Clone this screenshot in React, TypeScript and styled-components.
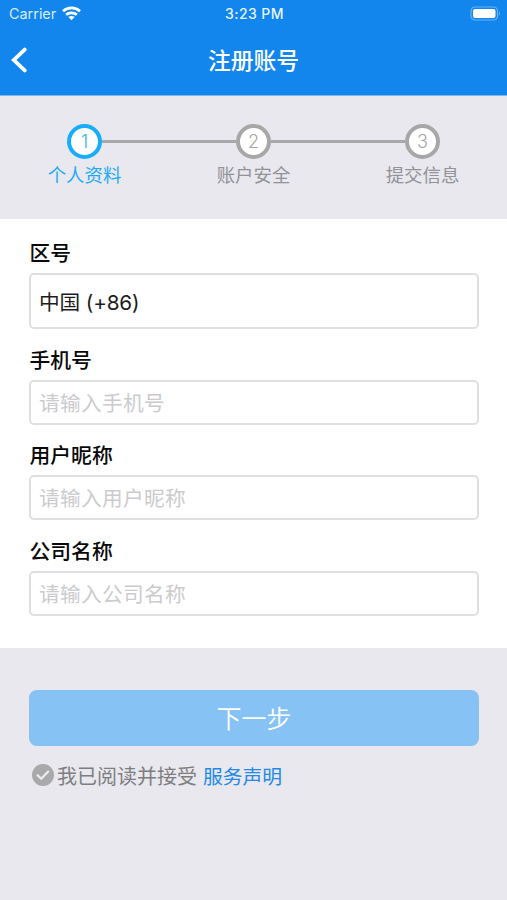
import React from "react";
import styled, { createGlobalStyle } from "styled-components";

const GlobalStyle = createGlobalStyle`
  *, *::before, *::after { box-sizing: border-box; }
  body {
    margin: 0;
    background: #e8e8ee;
    font-family: Inter, "Noto Sans CJK SC", sans-serif;
  }
`;

const Screen = styled.main`
  width: 100%;
  min-height: 900px;
  background: #e8e8ee;
`;

const Header = styled.header`
  height: 96px;
  background: #1286ed;
  border-bottom: 1px solid #7bb8f0;
  color: #fff;
`;

const StatusBar = styled.div`
  display: grid;
  grid-template-columns: 1fr auto 1fr;
  align-items: center;
  height: 27px;
  padding: 0 6px 0 9px;
`;

const Carrier = styled.div`
  display: flex;
  align-items: center;
  gap: 6px;
  font-size: 14.4px;
  line-height: 20px;
  color: #d9ecfd;
`;

const Clock = styled.div`
  margin-right: 1px;
  font-size: 14px;
  font-weight: 500;
  line-height: 20px;
  letter-spacing: 0.45px;
  color: #e9f5ff;
`;

const BatterySlot = styled.div`
  display: flex;
  justify-content: flex-end;
`;

const NavBar = styled.nav`
  display: grid;
  grid-template-columns: 60px 1fr 60px;
  align-items: center;
  height: 66px;
`;

const BackButton = styled.button`
  display: flex;
  height: 44px;
  padding: 0 0 0 9px;
  align-items: center;
  border: 0;
  background: none;
  color: #fff;
`;

const Title = styled.h1`
  margin: 0;
  padding-top: 2px;
  text-align: center;
  font-size: 22.8px;
  line-height: 32px;
  font-weight: 500;
`;

const Steps = styled.ol`
  display: grid;
  grid-template-columns: repeat(3, 169px);
  height: 123px;
  margin: 0;
  padding: 28px 0 0;
  list-style: none;
`;

const Step = styled.li<{ $active?: boolean }>`
  display: flex;
  flex-direction: column;
  align-items: center;
  color: ${(p) => (p.$active ? "#1daaf6" : "#929297")};
`;

const Track = styled.div`
  display: flex;
  align-items: center;
  width: 100%;
`;

const Line = styled.span<{ $hidden?: boolean }>`
  flex: 1;
  height: 3px;
  background: ${(p) => (p.$hidden ? "transparent" : "#a8a8aa")};
`;

const Circle = styled.span<{ $active?: boolean }>`
  display: flex;
  align-items: center;
  justify-content: center;
  width: 35px;
  height: 35px;
  border: 4px solid ${(p) => (p.$active ? "#18adfb" : "#a7a7a8")};
  border-radius: 50%;
  background: #fff;
  color: ${(p) => (p.$active ? "#2db4f7" : "#a4a4a7")};
  font-size: 18px;
  font-weight: 350;
  line-height: 27px;
`;

const StepLabel = styled.span`
  margin-top: 2px;
  font-size: 18.4px;
  line-height: 28px;
`;

const Form = styled.section`
  display: flex;
  flex-direction: column;
  height: 429px;
  padding: 17px 28px 0 29px;
  background: #fff;
`;

const Field = styled.label`
  display: block;
  margin-bottom: 13.3px;
`;

const FieldLabel = styled.span`
  display: block;
  height: 37.3px;
  padding-left: 0.5px;
  font-size: 20.8px;
  line-height: 36px;
  color: #080808;
  font-weight: 500;
`;

const inputHeight = (tall?: boolean) => (tall ? 56 : 45);

const Input = styled.input<{ $tall?: boolean }>`
  display: block;
  width: 100%;
  height: ${(p) => inputHeight(p.$tall)}px;
  padding: ${(p) => (p.$tall ? "0 8px" : "2px 8px 0")};
  border: 2px solid #dfdfdf;
  border-radius: 5px;
  outline: 0;
  background: #fff;
  color: #1c1c1c;
  font-family: inherit;
  font-size: 20.7px;
  letter-spacing: ${(p) => (p.$tall ? "-0.15px" : "0.3px")};

  &::placeholder {
    color: #cbcbcd;
    opacity: 1;
  }
`;

const Actions = styled.section`
  padding: 42px 28px 0 29px;
`;

const NextButton = styled.button`
  display: block;
  width: 100%;
  height: 56px;
  padding: 2px 0 0;
  border: 0;
  border-radius: 8px;
  background: #87c2f5;
  color: #fff;
  font-family: inherit;
  font-size: 25px;
  font-weight: 350;
  line-height: 54px;
`;

const Agreement = styled.div`
  display: flex;
  align-items: center;
  height: 30px;
  margin-top: 14px;
  padding-left: 3px;
  font-size: 20px;
  line-height: 30px;
  color: #7e7e81;
`;

const AgreementText = styled.span`
  margin-left: 3px;
  padding-top: 3px;
`;

const TermsLink = styled.a`
  margin-left: 6px;
  padding-top: 3px;
  color: #2489e6;
  font-size: 19.8px;
`;

const WifiIcon = () => (
  <svg width="19" height="15" viewBox="0 0 19 15" fill="none" stroke="#fff" strokeWidth="2.7">
    <path d="M1 5.2C5.8.7 13.2.7 18 5.2" />
    <path d="M4.1 8.8c3-2.7 7.8-2.7 10.8 0" />
    <path d="M9.5 14.2 6.3 11.1c1.8-1.5 4.6-1.5 6.4 0Z" fill="#fff" stroke="none" />
  </svg>
);

const BatteryIcon = () => (
  <svg width="31" height="15" viewBox="0 0 31 15">
    <rect x="1" y="1" width="26.5" height="13" rx="4" fill="none" stroke="#68b2f5" strokeWidth="1.2" />
    <rect x="3" y="3" width="22.5" height="9" rx="2" fill="#fff" />
    <path d="M29 5.5c1.4.5 1.4 3.5 0 4Z" fill="#68b2f5" />
  </svg>
);

const BackIcon = () => (
  <svg width="18" height="28" viewBox="0 0 18 28" fill="none" stroke="currentColor" strokeWidth="3.8" strokeLinecap="round" strokeLinejoin="miter">
    <path d="M15.7 3.6 4.8 14l10.9 10.4" />
  </svg>
);

const CheckIcon = () => (
  <svg width="22" height="22" viewBox="0 0 22 22">
    <circle cx="11" cy="11" r="11" fill="#a9a9ab" />
    <path d="m5.6 11.2 3.6 3.5 7-7.1" fill="none" stroke="#ededf1" strokeWidth="2.2" strokeLinecap="round" strokeLinejoin="round" />
  </svg>
);

const steps = ["个人资料", "账户安全", "提交信息"];

const fields = [
  { label: "区号", value: "中国 (+86)", tall: true },
  { label: "手机号", placeholder: "请输入手机号" },
  { label: "用户昵称", placeholder: "请输入用户昵称" },
  { label: "公司名称", placeholder: "请输入公司名称" },
];

export default function App() {
  return (
    <>
      <GlobalStyle />
      <Screen>
        <Header>
          <StatusBar>
            <Carrier>
              Carrier
              <WifiIcon />
            </Carrier>
            <Clock>3:23 PM</Clock>
            <BatterySlot>
              <BatteryIcon />
            </BatterySlot>
          </StatusBar>
          <NavBar>
            <BackButton aria-label="返回">
              <BackIcon />
            </BackButton>
            <Title>注册账号</Title>
          </NavBar>
        </Header>
        <Steps>
          {steps.map((label, i) => (
            <Step key={label} $active={i === 0}>
              <Track>
                <Line $hidden={i === 0} />
                <Circle $active={i === 0}>{i + 1}</Circle>
                <Line $hidden={i === steps.length - 1} />
              </Track>
              <StepLabel>{label}</StepLabel>
            </Step>
          ))}
        </Steps>
        <Form>
          {fields.map((f) => (
            <Field key={f.label}>
              <FieldLabel>{f.label}</FieldLabel>
              <Input $tall={f.tall} defaultValue={f.value} placeholder={f.placeholder} />
            </Field>
          ))}
        </Form>
        <Actions>
          <NextButton>下一步</NextButton>
          <Agreement>
            <CheckIcon />
            <AgreementText>我已阅读并接受</AgreementText>
            <TermsLink>服务声明</TermsLink>
          </Agreement>
        </Actions>
      </Screen>
    </>
  );
}
